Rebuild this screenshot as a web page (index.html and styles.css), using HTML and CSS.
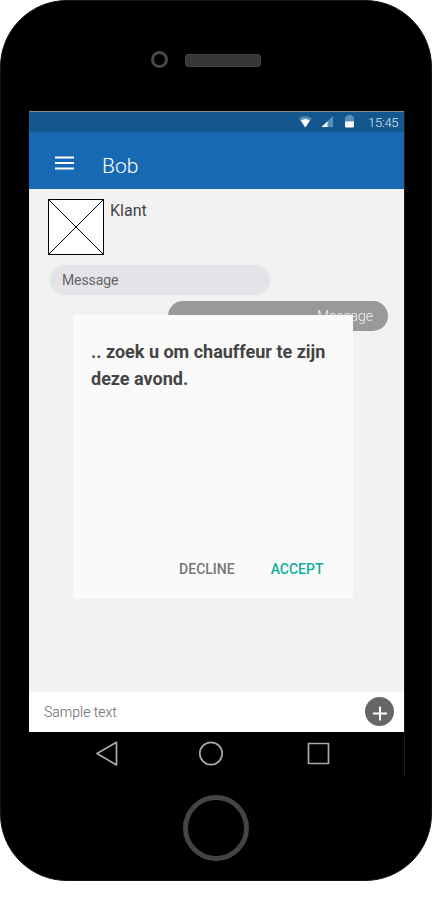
FILE: index.html
```
<!DOCTYPE html>
<html lang="nl">
<head>
<meta charset="utf-8">
<title>Bob</title>
<link rel="stylesheet" href="styles.css">
</head>
<body>
<div class="phone">
  <div class="earpiece"><span class="camera"></span><span class="speaker"></span></div>
  <div class="screen">
    <div class="status">
      <svg width="55" height="19" viewBox="0 0 55 19">
        <path d="M0 6.500Q6.300 2 12.600 6.500L6.300 15.500z" fill="#5c8fb8"/>
        <path d="M1.800 8.500Q6.300 5.500 10.800 8.500L6.300 15.500z" fill="#fff"/>
        <path d="M34 4V15H22.500z" fill="#5c8fb8"/>
        <path d="M28.500 9.500V15H22.500z" fill="#fff"/>
        <path d="M48 3h5v1q2 0 2 1.500V10h-9V5.500Q46 4 48 4z" fill="#5c8fb8"/>
        <path d="M46 9.500h9V14q0 1.500-1.500 1.500h-6Q46 15.500 46 14z" fill="#fff"/>
      </svg>
      <span class="time">15:45</span>
    </div>
    <header class="appbar">
      <svg width="19" height="14" viewBox="0 0 19 14"><path d="M0 1.500h19M0 7h19M0 12.500h19" stroke="#fff" stroke-width="2"/></svg>
      <h1>Bob</h1>
    </header>
    <main class="chat">
      <div class="contact">
        <svg width="56" height="56" viewBox="0 0 56 56"><path d="M.5.500h55v55H.5zL55.500 55.500M55.500.500L.5 55.500" fill="#fff" stroke="#000"/></svg>
        <span>Klant</span>
      </div>
      <div class="bubble received">Message</div>
      <div class="bubble sent">Message</div>
      <div class="dialog">
        <p>.. zoek u om chauffeur te zijn deze avond.</p>
        <div class="actions"><span>DECLINE</span><span class="accept">ACCEPT</span></div>
      </div>
    </main>
    <div class="composer">
      <span>Sample text</span>
      <svg width="30" height="30" viewBox="0 0 30 30"><circle cx="14.500" cy="14.500" r="14.500" fill="#666"/><path d="M8 16.500h14M15 9.500v14" stroke="#fff" stroke-width="2"/></svg>
    </div>
    <nav class="navbar">
      <svg width="375" height="44" viewBox="0 0 375 44" fill="none" stroke="#aaa" stroke-width="1.700" stroke-linejoin="round">
        <path d="M68 21.500L87.500 10.300V33z"/>
        <circle cx="182" cy="21.500" r="11.200"/>
        <path d="M279.500 11.500h20v20h-20z"/>
      </svg>
    </nav>
  </div>
  <div class="home"></div>
</div>
</body>
</html>
```
FILE: styles.css
```
* { box-sizing: border-box; }
body { margin: 0; background: #fff; font-family: Roboto, sans-serif; color: #444; }
svg { display: block; flex: none; }
.phone { width: 432px; height: 881px; background: #000; border: 1px solid #161616; border-radius: 67px; display: flex; flex-direction: column; }
.earpiece { height: 110px; padding: 50px 0 0 150px; display: flex; gap: 17px; align-items: flex-start; }
.camera { width: 17px; height: 17px; border: 3px solid #484848; border-radius: 50%; }
.speaker { width: 76px; height: 13px; margin-top: 3px; background: #363636; border: 1px solid #444; border-radius: 3px; }
.screen { width: 376px; height: 665px; margin-left: 28px; border-right: 1px solid #1c1c1c; display: flex; flex-direction: column; }
.status { height: 21px; background: #14578f; border-top: 1px solid #8b8b8b; display: flex; padding-left: 270px; }
.time { margin-left: 14px; font-size: 13px; line-height: 21px; font-weight: 300; color: #dce8f2; letter-spacing: -0.25px; }
.appbar { height: 57px; background: #1669b2; display: flex; align-items: flex-start; padding: 24px 0 0 26px; }
.appbar h1 { margin: -4px 0 0 28px; font-size: 21px; line-height: 28px; font-weight: 300; color: #fff; }
.chat { height: 503px; background: #f2f2f2; position: relative; padding-top: 10px; }
.contact { display: flex; gap: 6px; margin-left: 19px; font-size: 16px; line-height: 23px; }
.bubble { width: 220px; height: 30px; border-radius: 15px; font-size: 14px; line-height: 30px; }
.received { margin: 10px 0 0 21px; padding-left: 12px; background: #e4e3e8; color: #666; letter-spacing: -0.1px; }
.sent { margin: 6px 0 0 139px; padding-right: 15px; background: #999; color: #f0f0f0; font-weight: 300; text-align: right; }
.dialog { position: absolute; left: 44px; top: 126px; width: 280px; height: 284px; background: #fafafa; padding: 23px 18px 20px; display: flex; flex-direction: column; justify-content: space-between; }
.dialog p { margin: 0; font-size: 18px; line-height: 27px; font-weight: 700; }
.actions { display: flex; justify-content: flex-end; gap: 36px; padding-right: 11.5px; font-size: 14px; line-height: 20px; font-weight: 500; color: #777; }
.accept { color: #12ad9a; }
.composer { height: 40px; background: #fff; display: flex; align-items: flex-start; justify-content: space-between; padding: 5px 9px 0 15px; font-size: 14px; line-height: 30px; font-weight: 300; color: #666; }
.navbar { height: 44px; }
.home { width: 66px; height: 66px; border: 5px solid #444; border-radius: 50%; margin: 19px 0 0 182px; }
```
